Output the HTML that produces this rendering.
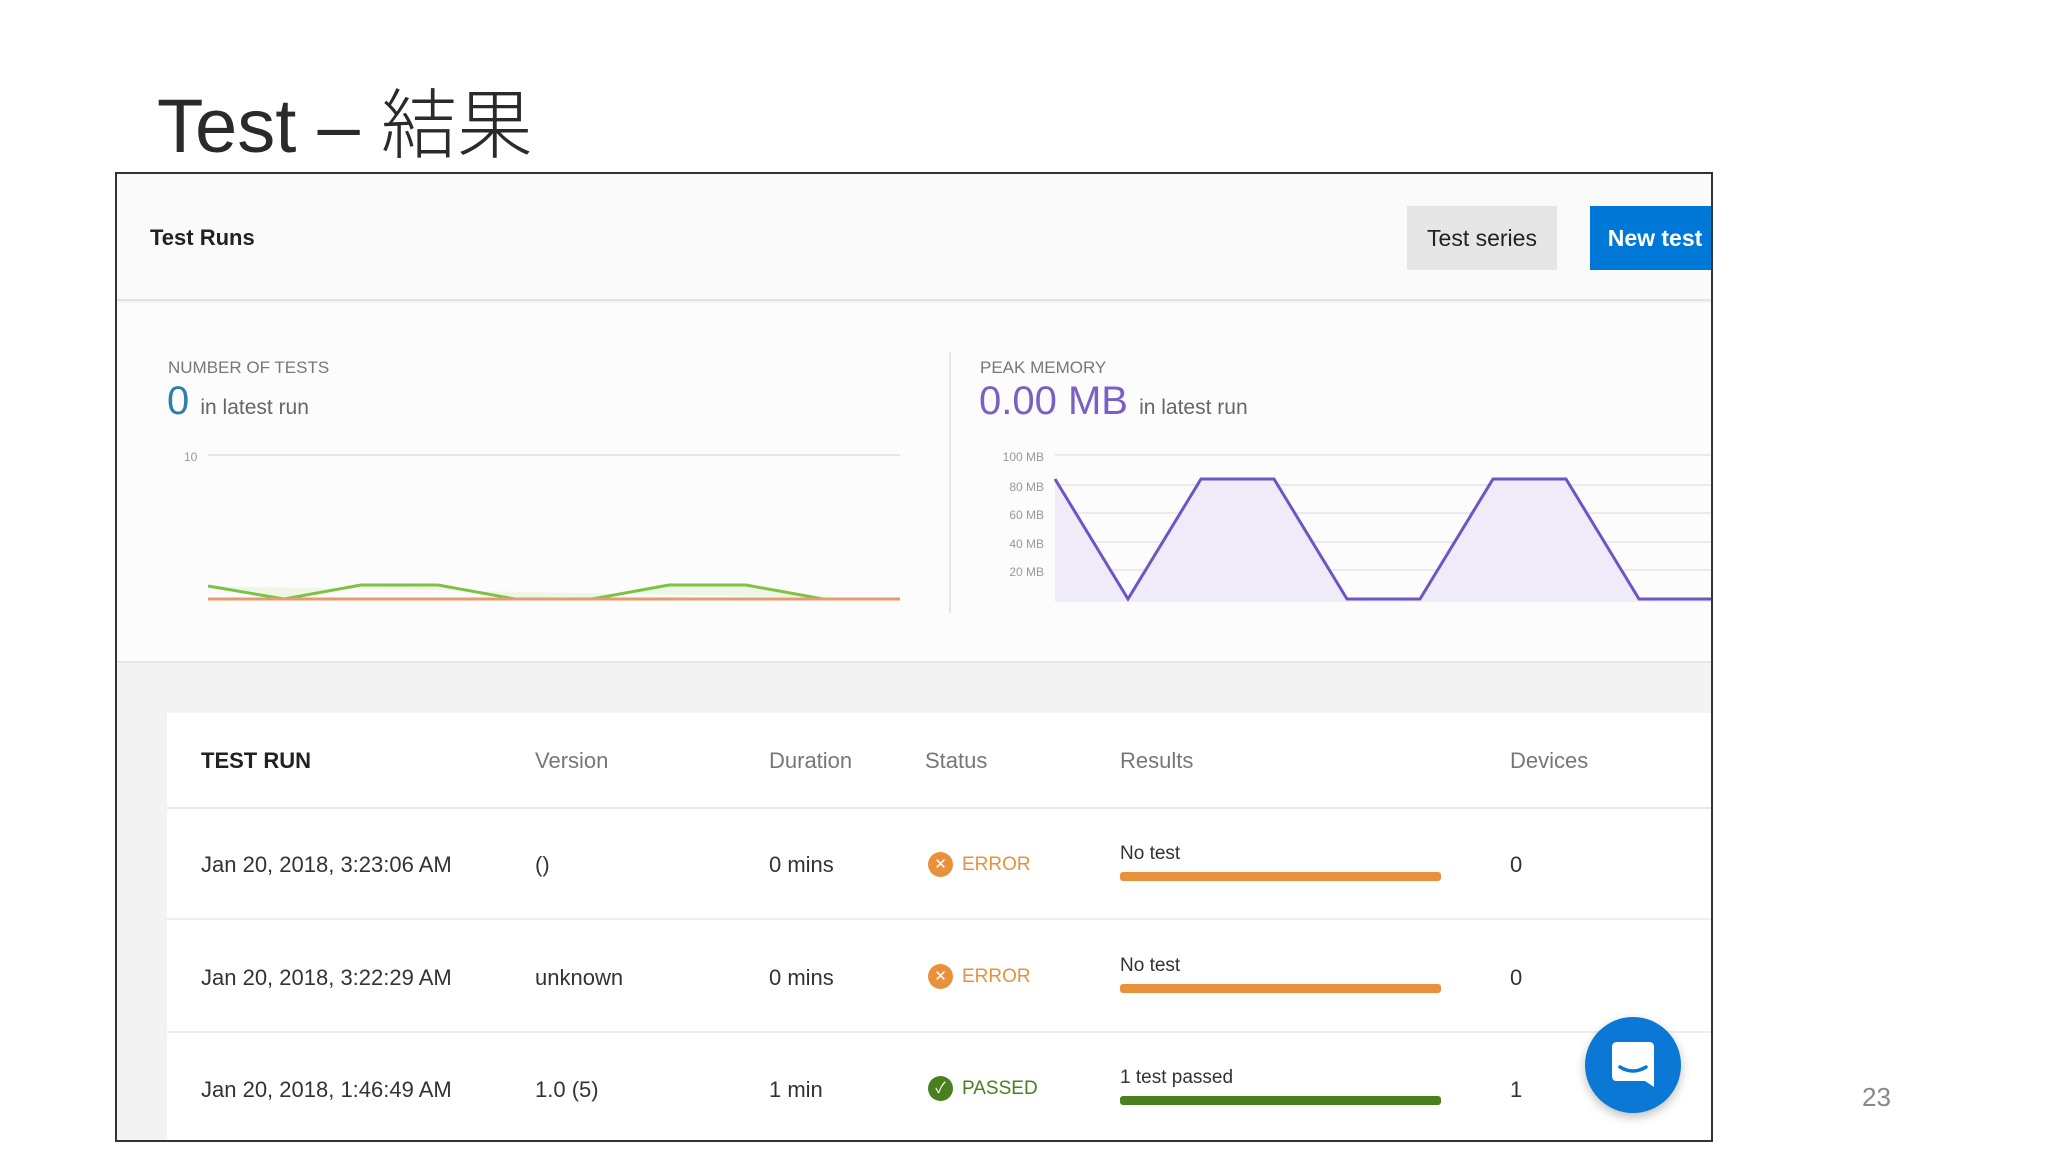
<!DOCTYPE html>
<html><head><meta charset="utf-8"><style>
*{margin:0;padding:0;box-sizing:border-box}
body{width:2048px;height:1152px;background:#fff;position:relative;overflow:hidden;font-family:"Liberation Sans","Noto Sans CJK JP",sans-serif}
.a{position:absolute;white-space:nowrap}
</style></head><body>
<div class="a" style="left:157px;top:82px;font-size:76px;font-weight:300;color:#2a2a2a;line-height:90px">Test – 結果</div>
<div class="a" style="left:115px;top:172px;width:1598px;height:970px;border:2px solid #333;background:#f3f3f3;overflow:hidden">
 <div class="a" style="left:0;top:0;width:1600px;height:127px;background:#fafafa;border-bottom:2px solid #e4e4e4"></div>
 <div class="a" style="left:33px;top:51px;font-size:22px;color:#222;font-weight:600">Test Runs</div>
 <div class="a" style="left:1290px;top:32px;width:150px;height:64px;background:#e6e6e6;font-size:23px;color:#222;text-align:center;line-height:64px">Test series</div>
 <div class="a" style="left:1473px;top:32px;width:130px;height:64px;background:#0078d7;font-size:23px;color:#fff;font-weight:bold;text-align:center;line-height:64px">New test</div>
 <div class="a" style="left:0;top:129px;width:1600px;height:360px;background:#fcfcfc;border-bottom:2px solid #e8e8e8"></div>
 <div class="a" style="left:51px;top:184px;font-size:17px;color:#777">NUMBER OF TESTS</div>
 <div class="a" style="left:50px;top:205px;font-size:40px;color:#2f7fa8">0 <span style="font-size:21px;color:#666">in latest run</span></div>
 <div class="a" style="left:832px;top:178px;width:2px;height:261px;background:#e6e6e6"></div>
 <div class="a" style="left:863px;top:184px;font-size:17px;color:#777">PEAK MEMORY</div>
 <div class="a" style="left:862px;top:205px;font-size:40px;color:#7b5fc7">0.00 MB <span style="font-size:21px;color:#666">in latest run</span></div>
 <svg class="a" style="left:0;top:0" width="1600" height="500">
  <g font-family="Liberation Sans" font-size="12" fill="#999">
   <text x="67" y="287">10</text>
   <text x="927" y="287" text-anchor="end">100 MB</text><text x="927" y="317" text-anchor="end">80 MB</text><text x="927" y="345" text-anchor="end">60 MB</text><text x="927" y="374" text-anchor="end">40 MB</text><text x="927" y="402" text-anchor="end">20 MB</text>
  </g>
  <line x1="91" y1="281" x2="783" y2="281" stroke="#e6e6e6" stroke-width="2"/>
  <g stroke="#eaeaea" stroke-width="2"><line x1="938" y1="281" x2="1600" y2="281"/><line x1="938" y1="311" x2="1600" y2="311"/><line x1="938" y1="339" x2="1600" y2="339"/><line x1="938" y1="368" x2="1600" y2="368"/><line x1="938" y1="396" x2="1600" y2="396"/></g>
  <polygon points="91,412 167,425 244,411 321,411 398,425 475,425 552,411 629,411 706,425 783,425" fill="#eef7e6"/>
  <polyline points="91,412 167,425 244,411 321,411 398,425 475,425 552,411 629,411 706,425 783,425" fill="none" stroke="#7dc243" stroke-width="3"/>
  <line x1="91" y1="425" x2="783" y2="425" stroke="#e99a6e" stroke-width="3"/>
  <polygon points="938,305 1011,425 1084,305 1157,305 1230,425 1303,425 1376,305 1449,305 1522,425 1600,425 1600,428 938,428" fill="#efebf8"/>
  <polyline points="938,305 1011,425 1084,305 1157,305 1230,425 1303,425 1376,305 1449,305 1522,425 1600,425" fill="none" stroke="#6f55c4" stroke-width="3"/>
 </svg>
 <div class="a" style="left:50px;top:539px;width:1560px;height:440px;background:#fff"></div>
 <div class="a" style="left:50px;top:633px;width:1560px;height:2px;background:#e8e8e8"></div>
 <div class="a" style="left:50px;top:744px;width:1560px;height:2px;background:#eee"></div>
 <div class="a" style="left:50px;top:857px;width:1560px;height:2px;background:#eee"></div>
 <div class="a" style="top:574px;left:84px;font-size:22px;color:#222;font-weight:bold">TEST RUN</div>
 <div class="a" style="top:574px;left:418px;font-size:22px;color:#777">Version</div>
 <div class="a" style="top:574px;left:652px;font-size:22px;color:#777">Duration</div>
 <div class="a" style="top:574px;left:808px;font-size:22px;color:#777">Status</div>
 <div class="a" style="top:574px;left:1003px;font-size:22px;color:#777">Results</div>
 <div class="a" style="top:574px;left:1393px;font-size:22px;color:#777">Devices</div>

 <div class="a" style="top:678px;left:84px;font-size:22px;color:#333">Jan 20, 2018, 3:23:06 AM</div>
 <div class="a" style="top:678px;left:418px;font-size:22px;color:#333">()</div>
 <div class="a" style="top:678px;left:652px;font-size:22px;color:#333">0 mins</div>
 <div class="a" style="top:678px;left:811px;width:25px;height:25px;border-radius:50%;background:#e8913a;color:#fff;font-size:15px;text-align:center;line-height:25px">✕</div>
 <div class="a" style="top:680px;left:845px;font-size:19px;color:#e8913a">ERROR</div>
 <div class="a" style="top:669px;left:1003px;font-size:19px;color:#333">No test</div>
 <div class="a" style="top:698px;left:1003px;width:321px;height:9px;border-radius:3px;background:#e8913a"></div>
 <div class="a" style="top:678px;left:1393px;font-size:22px;color:#333">0</div>

 <div class="a" style="top:791px;left:84px;font-size:22px;color:#333">Jan 20, 2018, 3:22:29 AM</div>
 <div class="a" style="top:791px;left:418px;font-size:22px;color:#333">unknown</div>
 <div class="a" style="top:791px;left:652px;font-size:22px;color:#333">0 mins</div>
 <div class="a" style="top:790px;left:811px;width:25px;height:25px;border-radius:50%;background:#e8913a;color:#fff;font-size:15px;text-align:center;line-height:25px">✕</div>
 <div class="a" style="top:792px;left:845px;font-size:19px;color:#e8913a">ERROR</div>
 <div class="a" style="top:781px;left:1003px;font-size:19px;color:#333">No test</div>
 <div class="a" style="top:810px;left:1003px;width:321px;height:9px;border-radius:3px;background:#e8913a"></div>
 <div class="a" style="top:791px;left:1393px;font-size:22px;color:#333">0</div>

 <div class="a" style="top:903px;left:84px;font-size:22px;color:#333">Jan 20, 2018, 1:46:49 AM</div>
 <div class="a" style="top:903px;left:418px;font-size:22px;color:#333">1.0 (5)</div>
 <div class="a" style="top:903px;left:652px;font-size:22px;color:#333">1 min</div>
 <div class="a" style="top:902px;left:811px;width:25px;height:25px;border-radius:50%;background:#4a7f1e;color:#fff;font-size:15px;text-align:center;line-height:25px">✓</div>
 <div class="a" style="top:904px;left:845px;font-size:19px;color:#4a7f1e">PASSED</div>
 <div class="a" style="top:893px;left:1003px;font-size:19px;color:#333">1 test passed</div>
 <div class="a" style="top:922px;left:1003px;width:321px;height:9px;border-radius:3px;background:#4a7f1e"></div>
 <div class="a" style="top:903px;left:1393px;font-size:22px;color:#333">1</div>

 <div class="a" style="left:1468px;top:843px;width:96px;height:96px;border-radius:50%;background:#0a78d4;box-shadow:0 4px 10px rgba(0,0,0,.25)">
  <svg width="96" height="96"><path d="M27 30 Q27 25 32 25 L64 25 Q69 25 69 30 L69 70 L60 64 L32 64 Q27 64 27 59 Z" fill="#fff"/><path d="M35 50 Q48 58 61 50" fill="none" stroke="#0a78d4" stroke-width="3.5" stroke-linecap="round"/></svg>
 </div>
</div>
<div class="a" style="left:1862px;top:1082px;font-size:26px;color:#888">23</div>
</body></html>
